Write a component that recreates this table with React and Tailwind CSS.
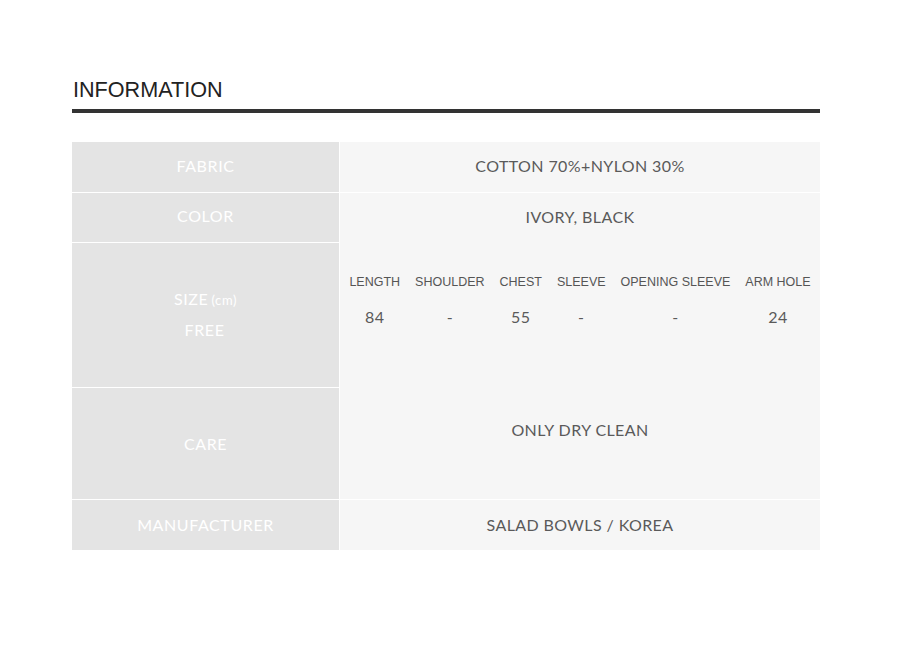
const sizes = [
  { label: 'LENGTH', value: '84' },
  { label: 'SHOULDER', value: '-' },
  { label: 'CHEST', value: '55' },
  { label: 'SLEEVE', value: '-' },
  { label: 'OPENING SLEEVE', value: '-' },
  { label: 'ARM HOLE', value: '24' },
]

const gill = { fontFamily: 'Lato, "Open Sans", sans-serif' }

function Label({ children, className = '' }) {
  return (
    <div
      className={`w-[267px] shrink-0 bg-[#e4e4e4] text-white text-[16px] tracking-[0.6px] flex flex-col items-center justify-center ${className}`}
      style={gill}
    >
      {children}
    </div>
  )
}

export default function App() {
  return (
    <div className="w-[900px] h-[652px] bg-white pt-[79px] pl-[72px]">
      <div className="w-[748px]">
        <h2
          className="text-[21.6px] leading-[22px] text-[#222] pl-px"
          style={{ fontFamily: '"Liberation Sans", Arial, sans-serif' }}
        >
          INFORMATION
        </h2>
        <div className="mt-[8px] h-1 bg-[#333]" />

        <div className="mt-[29px] flex flex-col text-[#5a5a5a] tracking-[0.4px]">
          <div className="flex h-[51px] border-b border-white">
            <Label className="pb-[3px]">FABRIC</Label>
            <div className="flex-1 ml-px bg-[#f6f6f6] flex items-center justify-center text-[16px] pb-[3px]" style={gill}>
              COTTON 70%+NYLON 30%
            </div>
          </div>

          <div className="flex h-[50px]">
            <Label className="border-b border-white pb-[3px]">COLOR</Label>
            <div className="flex-1 ml-px bg-[#f6f6f6] flex items-center justify-center text-[16px] pb-[3px]" style={gill}>
              IVORY, BLACK
            </div>
          </div>

          <div className="flex h-[145px]">
            <Label className="border-b border-white pb-[2px]">
              <div className="leading-[30px]">
                SIZE<span className="text-[13px] ml-[3px]">(cm)</span>
              </div>
              <div className="leading-[30px] -ml-[2px]">FREE</div>
            </Label>
            <div className="flex-1 ml-px bg-[#f6f6f6] flex justify-center pt-[27px]">
              <table className="border-collapse h-fit">
                <thead>
                  <tr>
                    {sizes.map((s) => (
                      <th
                        key={s.label}
                        className="px-[7.5px] h-6 font-normal text-[12.5px] tracking-normal text-[#555] whitespace-nowrap"
                        style={{ fontFamily: '"Liberation Sans", Arial, sans-serif' }}
                      >
                        {s.label}
                      </th>
                    ))}
                  </tr>
                </thead>
                <tbody>
                  <tr>
                    {sizes.map((s) => (
                      <td key={s.label} className="pt-[10px] h-[35px] text-center text-[16px]" style={gill}>
                        {s.value}
                      </td>
                    ))}
                  </tr>
                </tbody>
              </table>
            </div>
          </div>

          <div className="flex h-[112px] border-b border-white">
            <Label>CARE</Label>
            <div className="flex-1 ml-px bg-[#f6f6f6] flex justify-center pt-[30px] text-[16px]" style={gill}>
              <div className="h-6 leading-6">ONLY DRY CLEAN</div>
            </div>
          </div>

          <div className="flex h-[50px]">
            <Label>MANUFACTURER</Label>
            <div className="flex-1 ml-px bg-[#f6f6f6] flex items-center justify-center text-[16px]" style={gill}>
              SALAD BOWLS / KOREA
            </div>
          </div>
        </div>
      </div>
    </div>
  )
}
